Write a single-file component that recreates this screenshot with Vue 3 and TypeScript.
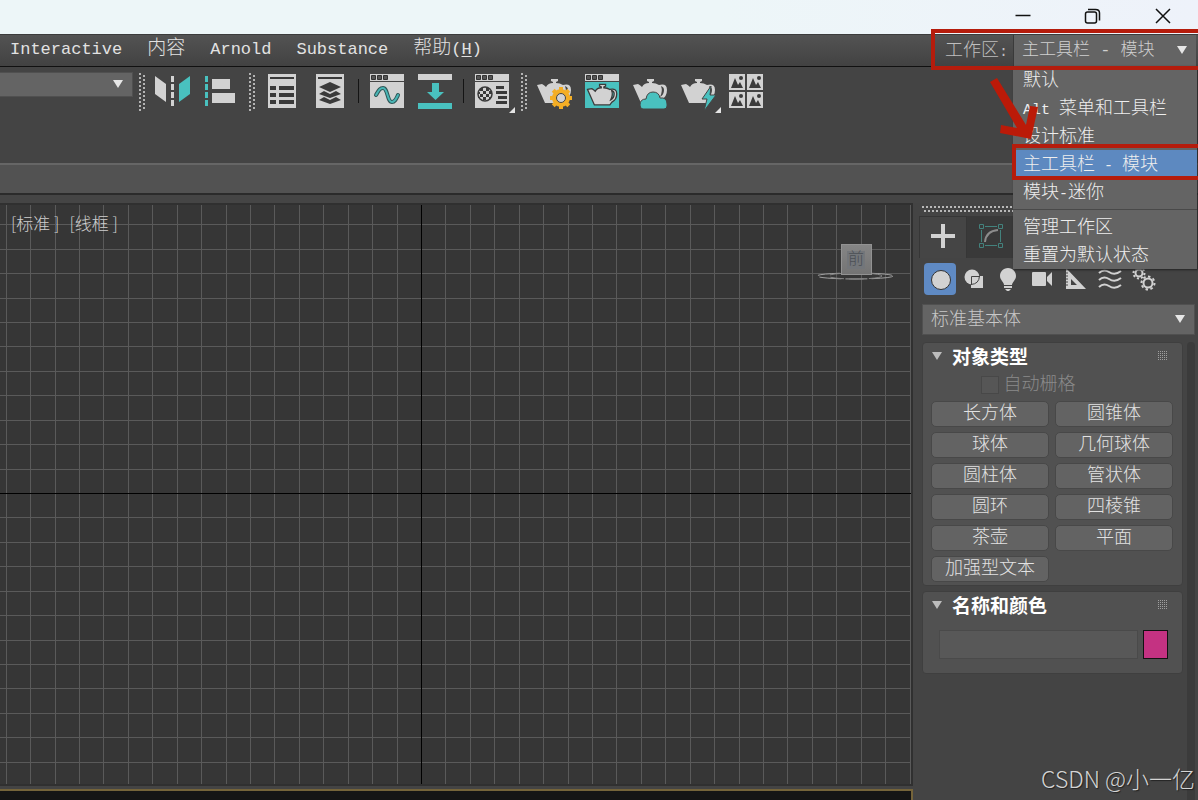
<script setup lang="ts">
import { ref } from 'vue'

interface Segment { text: string; latin: boolean }

/** Splits a label into runs, as Latin letters are set smaller than Chinese ones. */
function segments(text: string): Segment[] {
  return (text.match(/[\x20-\x7e]+|[^\x20-\x7e]+/g) ?? []).map((t) => ({
    text: t,
    latin: /^[\x20-\x7e]/.test(t),
  }))
}

const menus = ['Interactive', '内容', 'Arnold', 'Substance']
const workspaces = ['默认', 'Alt 菜单和工具栏', '设计标准', '主工具栏 - 模块', '模块-迷你']
const workspaceActions = ['管理工作区', '重置为默认状态']
const workspace = ref('主工具栏 - 模块')
const category = ref('标准基本体')
const primitives = [
  '长方体', '圆锥体', '球体', '几何球体', '圆柱体', '管状体',
  '圆环', '四棱锥', '茶壶', '平面', '加强型文本',
]
const objectName = ref('')

const PITCH = 24.43
const columns = Array.from({ length: 120 }, (_, i) => 421 + Math.round((i - 17) * PITCH))
const rows = Array.from({ length: 80 }, (_, i) => 288 + Math.round((i - 11) * PITCH))

const teapot =
  'M7 18L12 17Q14 18 16 20Q18 16 23 16V15L21 14V12H28V14L26 15V16Q30 16 33 18Q41 16 41 23Q41 30 35 33L33 36H15ZM35 19Q37 24 34 30Q38 28 38 23Q38 20 35 19Z'
const gearTeeth = [0, 45, 90, 135, 180, 225, 270, 315]
const tiles = [[7, 7], [25, 7], [7, 25], [25, 25]]
</script>

<template>
  <div class="app">
    <header class="titlebar">
      <button class="win" aria-label="最小化">
        <svg width="18" height="18"><path d="M1.500 8.500H16.500" /></svg>
      </button>
      <button class="win" aria-label="还原">
        <svg width="18" height="18"><rect x="1.500" y="5" width="11" height="11" rx="2" /><path d="M4 2.500H11.500Q15.500 2.500 15.500 6V13.500" /></svg>
      </button>
      <button class="win" aria-label="关闭">
        <svg width="18" height="18"><path d="M2 2L16 16M16 2L2 16" /></svg>
      </button>
    </header>

    <div class="menubar">
      <nav class="menus">
        <button v-for="m in menus" :key="m" class="menu">
          <span v-for="(s, i) in segments(m)" :key="i" :class="{ latin: s.latin }">{{ s.text }}</span>
        </button>
        <button class="menu">帮助<span class="latin">(<u>H</u>)</span></button>
      </nav>
      <div class="workspace">
        <label for="workspace">工作区<span class="small">:</span></label>
        <div class="combo ws-combo">
          <select id="workspace" v-model="workspace">
            <option v-for="w in workspaces" :key="w">{{ w }}</option>
          </select>
          <svg class="caret" width="12" height="10"><path d="M1 1H11L6 9Z" /></svg>
          <div class="dropdown">
            <button
              v-for="w in workspaces" :key="w" class="entry"
              :class="{ active: w === workspace }" @click="workspace = w"
            ><span v-for="(s, i) in segments(w)" :key="i" :class="{ small: s.latin }">{{ s.text }}</span></button>
            <hr />
            <button v-for="a in workspaceActions" :key="a" class="entry">{{ a }}</button>
          </div>
        </div>
      </div>
    </div>

    <div class="toolbar">
      <div class="combo sel-combo">
        <select aria-label="选择集"><option></option></select>
        <svg class="caret" width="12" height="10"><path d="M1 1H11L6 9Z" /></svg>
      </div>
      <i class="grip"></i>
      <button class="tool" aria-label="镜像">
        <svg viewBox="0 0 48 48">
          <path class="lt" d="M7 9L18 17V35L7 27Z" />
          <path class="teal" d="M31 17L42 9V27L31 35Z" />
          <path class="lt" d="M23 9h3v6h-3zM23 17h3v6h-3zM23 25h3v6h-3zM23 33h3v6h-3z" />
        </svg>
      </button>
      <button class="tool" aria-label="对齐">
        <svg viewBox="0 0 48 48">
          <path class="teal" d="M9 9h3v6h-3zM9 17h3v6h-3zM9 25h3v6h-3zM9 33h3v6h-3z" />
          <path class="lt" d="M16 12h18v10h-18zM16 26h23v10h-23z" />
        </svg>
      </button>
      <i class="grip"></i>
      <button class="tool" aria-label="场景资源管理器">
        <svg viewBox="0 0 48 48">
          <rect class="lt" x="10" y="7" width="28" height="34" />
          <path class="dk" d="M12 10h24v2h-24zM12 19h6v4h-6zM21 19h15v4h-15zM12 26h6v4h-6zM21 26h15v4h-15zM12 33h6v4h-6zM21 33h15v4h-15z" />
        </svg>
      </button>
      <button class="tool" aria-label="层资源管理器">
        <svg viewBox="0 0 48 48">
          <rect class="lt" x="10" y="7" width="28" height="34" />
          <path class="dk" d="M12 10h24v2h-24zM13 20L24 15L35 20L24 25ZM13 27L18 24L24 27L30 24L35 27L24 31ZM13 33L18 30L24 33L30 30L35 33L24 37Z" />
        </svg>
      </button>
      <i class="sep"></i>
      <button class="tool" aria-label="曲线编辑器">
        <svg viewBox="0 0 48 48">
          <path class="lt" d="M7 7h34v7h-34zM7 15h34v26h-34z" />
          <path class="box" d="M8.500 8.500h4v4h-4zM14.500 8.500h4v4h-4zM20.500 8.500h4v4h-4z" />
          <path class="wave-edge" d="M13 28C16 23 17 21 20 21C25 21 24 35 29 35C32 35 33 32 35 28" />
          <path class="wave" d="M13 28C16 23 17 21 20 21C25 21 24 35 29 35C32 35 33 32 35 28" />
        </svg>
      </button>
      <button class="tool" aria-label="图解视图">
        <svg viewBox="0 0 48 48">
          <rect class="lt" x="7" y="7" width="34" height="6" />
          <path class="teal" d="M21 16h7v9h5L24.500 33L16 25h5zM7 36h34v6h-34z" />
        </svg>
      </button>
      <i class="sep"></i>
      <button class="tool" aria-label="材质编辑器">
        <svg viewBox="0 0 48 48">
          <path class="lt" d="M7 7h34v7h-34zM7 15h34v26h-34z" />
          <path class="box" d="M8.500 8.500h4v4h-4zM14.500 8.500h4v4h-4zM20.500 8.500h4v4h-4z" />
          <circle class="ring" cx="17" cy="27" r="7" />
          <path class="dk" d="M12 21h3v3h-3zM18 21h3v3h-3zM15 24h3v3h-3zM10 25h2v2h-2zM21 24h3v3h-3zM12 27h3v3h-3zM18 27h3v3h-3zM15 30h3v3h-3zM10 30h2v1h-2zM21 30h2v2h-2z" />
          <path class="dk" d="M28 19h8v3h-8zM28 24h11v3h-11zM30 29h9v3h-9zM28 34h11v3h-11z" />
          <path class="fly" d="M41 46L47 40V46Z" />
        </svg>
      </button>
      <i class="grip"></i>
      <button class="tool" aria-label="渲染设置">
        <svg viewBox="0 0 48 48">
          <path class="lt" fill-rule="evenodd" :d="teapot" />
          <g transform="translate(31 31)">
            <rect v-for="a in gearTeeth" :key="a" class="gold" x="-2" y="-11" width="4" height="5" :transform="`rotate(${a})`" />
            <circle class="gold" r="9" />
            <circle class="hub" r="4.500" />
          </g>
        </svg>
      </button>
      <button class="tool" aria-label="渲染帧窗口">
        <svg viewBox="0 0 48 48">
          <rect class="lt" x="7" y="7" width="34" height="7" />
          <path class="box" d="M8.500 8.500h4v4h-4zM14.500 8.500h4v4h-4zM20.500 8.500h4v4h-4z" />
          <rect class="teal" x="7" y="15" width="34" height="26" />
          <path class="pot" transform="translate(3.500 7) scale(.86)" fill-rule="evenodd" :d="teapot" />
        </svg>
      </button>
      <button class="tool" aria-label="在云中渲染">
        <svg viewBox="0 0 48 48">
          <path class="lt" fill-rule="evenodd" :d="teapot" />
          <path class="teal edge" d="M17 42Q14 42 14 38Q14 32 20 32Q21 25 27 25Q33 25 34 31Q41 30 41 37V39Q41 42 38 42Z" />
        </svg>
      </button>
      <button class="tool" aria-label="渲染产品">
        <svg viewBox="0 0 48 48">
          <path class="lt" fill-rule="evenodd" :d="teapot" />
          <path class="teal edge" d="M37 19L28 32H33L30 44L42 28H36Z" />
          <path class="fly" d="M41 46L47 40V46Z" />
        </svg>
      </button>
      <button class="tool" aria-label="图库">
        <svg viewBox="0 0 48 48">
          <g v-for="([x, y], i) in tiles" :key="i" :transform="`translate(${x} ${y})`">
            <rect class="lt" width="16" height="16" />
            <path class="dk" d="M2 14L6 4L9 11L11 8L14 14Z" />
            <circle class="dk" cx="12" cy="4" r="2" />
          </g>
        </svg>
      </button>
    </div>

    <div class="ribbon"></div>

    <main class="main">
      <section class="views">
        <div class="viewport">
          <svg class="grid" width="100%" height="100%">
            <line v-for="x in columns" :key="'c' + x" :x1="x" :x2="x" y1="0" y2="100%" />
            <line v-for="y in rows" :key="'r' + y" x1="0" x2="100%" :y1="y" :y2="y" />
            <line class="axis" x1="421" x2="421" y1="0" y2="100%" />
            <line class="axis" x1="0" x2="100%" y1="288" y2="288" />
          </svg>
          <div class="view-label"><span>[标准 ]</span><span>[线框 ]</span></div>
          <div class="cube-wrap">
            <svg class="compass" width="80" height="12">
              <ellipse class="c1" cx="39" cy="5" rx="38" ry="3" />
              <ellipse class="c2" cx="39" cy="5" rx="27" ry="3" />
            </svg>
            <div class="cube"><span>前</span></div>
          </div>
        </div>
        <div class="next-view"></div>
      </section>

      <aside class="panel">
        <div class="panel-grip"></div>
        <div class="tabs">
          <button class="tab on" aria-label="创建">
            <svg width="26" height="26"><path class="lt" d="M11 1h4v10h10v4h-10v10h-4v-10h-10v-4h10z" /></svg>
          </button>
          <button class="tab" aria-label="修改">
            <svg width="26" height="26" class="modify">
              <path d="M7 3.500H19M7 22.500H19M3.500 7V19M22.500 7V19" />
              <path d="M1.500 1.500h4v4h-4zM20.500 1.500h4v4h-4zM1.500 20.500h4v4h-4zM20.500 20.500h4v4h-4z" />
              <path class="arc" d="M7 19Q8 8 20 7" />
            </svg>
          </button>
        </div>
        <div class="kinds">
          <button class="kind on" aria-label="几何体"><svg viewBox="0 0 32 32"><circle class="lt rim" cx="17" cy="17" r="9.500" /></svg></button>
          <button class="kind" aria-label="图形"><svg viewBox="0 0 32 32"><circle class="lt" cx="14" cy="14" r="7.500" /><rect class="lt" x="13" y="13" width="12" height="12" /><path class="cut" d="M13.500 22V13.500H22M21.500 13Q21 21 13 21.500" /></svg></button>
          <button class="kind" aria-label="灯光"><svg viewBox="0 0 32 32"><path class="lt" d="M16 5C11 5 8 9 8 13C8 17 12 19 12 22H20C20 19 24 17 24 13C24 9 21 5 16 5ZM12 23h8v2h-8zM13 26h6l-2 2h-2z" /></svg></button>
          <button class="kind" aria-label="摄影机"><svg viewBox="0 0 32 32"><rect class="lt" x="6" y="9" width="14" height="14" rx="1" /><path class="lt" d="M21 14L26 9V23L21 18Z" /></svg></button>
          <button class="kind" aria-label="辅助对象"><svg viewBox="0 0 32 32"><path class="lt" fill-rule="evenodd" d="M6 5L26 26H6ZM11 16V22H17Z" /><path class="cut" d="M6 10h2M6 13h2M6 16h2M6 19h2M6 22h2" /></svg></button>
          <button class="kind" aria-label="空间扭曲"><svg viewBox="0 0 32 32"><path class="waves" d="M5 10C9 6 12 7 15 9S22 12 27 8M5 17C9 13 12 14 15 16S22 19 27 15M5 24C9 20 12 21 15 23S22 26 27 22" /></svg></button>
          <button class="kind" aria-label="系统"><svg viewBox="0 0 32 32">
            <circle class="cog" cx="11" cy="10" r="3.500" /><circle class="cog-teeth" cx="11" cy="10" r="5.500" pathLength="16" />
            <circle class="cog" cx="20" cy="20" r="4.500" /><circle class="cog-teeth" cx="20" cy="20" r="6.500" pathLength="16" />
          </svg></button>
        </div>
        <div class="combo cat-combo">
          <select v-model="category" aria-label="类别"><option>标准基本体</option></select>
          <svg class="caret" width="12" height="10"><path d="M1 1H11L6 9Z" /></svg>
        </div>
        <div class="scroll">
          <div class="rollouts">
            <section class="rollout">
              <h2><svg width="12" height="10"><path d="M1 1H11L6 9Z" /></svg>对象类型<i class="dots"></i></h2>
              <label class="auto"><input type="checkbox" disabled />自动栅格</label>
              <div class="primitives">
                <button v-for="p in primitives" :key="p">{{ p }}</button>
              </div>
            </section>
            <section class="rollout">
              <h2><svg width="12" height="10"><path d="M1 1H11L6 9Z" /></svg>名称和颜色<i class="dots"></i></h2>
              <div class="name-row">
                <input v-model="objectName" type="text" aria-label="名称" />
                <button class="swatch" aria-label="颜色"></button>
              </div>
            </section>
          </div>
          <div class="track"></div>
        </div>
      </aside>
    </main>

    <svg class="marks" width="270" height="184">
      <path class="frame" d="M275 31H5V68H275M275 146H86V178H275" />
      <path class="arrow" d="M62 82L69 78L98 125L102 106L110 107L103 139L72 133L73 125L89 128Z" />
    </svg>
    <div class="watermark">CSDN @小一亿</div>
  </div>
</template>

<style>
body {
  margin: 0;
  background: #444;
}
</style>

<style scoped>
.app {
  position: relative;
  display: flex;
  flex-direction: column;
  min-height: 100vh;
  overflow: hidden;
  background: #444;
  color: #e2e2e2;
  font: 300 18px/28px 'Liberation Mono', 'Noto Sans CJK SC', monospace;
}
button,
select,
input {
  margin: 0;
  padding: 0;
  border: 0;
  border-radius: 0;
  background: none;
  color: inherit;
  font: inherit;
  box-sizing: border-box;
}
svg {
  display: block;
}
.latin {
  font-size: 17px;
}
.small {
  font-size: 15px;
  white-space: pre;
}

.titlebar {
  display: flex;
  justify-content: flex-end;
  height: 34px;
  background: linear-gradient(90deg, #edf6f8 60%, #eef2fa);
}
.win {
  display: grid;
  place-items: center;
  width: 70px;
  height: 32px;
}
.win svg {
  fill: none;
  stroke: #111;
  stroke-width: 1.5;
}

.menubar {
  display: flex;
  justify-content: space-between;
  height: 33px;
  box-sizing: border-box;
  border-top: 1px solid #3c3c3c;
  border-bottom: 1px solid #111;
  background: linear-gradient(#535353, #424242);
}
.menus {
  display: flex;
  gap: 25px;
  padding-left: 10px;
}
.menu {
  font-size: 19px;
  line-height: 26px;
  height: 28px;
  white-space: nowrap;
}
.menu u {
  text-underline-offset: 2px;
}
.workspace {
  display: flex;
  color: #bebebe;
}
.workspace label {
  width: 68px;
  line-height: 32px;
}
.combo {
  position: relative;
  background: #646464;
  box-sizing: border-box;
}
.combo select {
  appearance: none;
  width: 100%;
  height: 100%;
  outline: 0;
}
.caret {
  position: absolute;
  top: 50%;
  right: 8px;
  margin-top: -6px;
  fill: #e6e6e6;
  pointer-events: none;
}
.ws-combo {
  width: 183px;
  height: 31px;
  margin-right: 2px;
  border-left: 1px solid #3a3a3a;
}
.ws-combo select {
  padding-left: 8px;
  font-size: 17px;
  color: #d0d0d0;
}
.dropdown {
  position: absolute;
  z-index: 2;
  top: 31px;
  left: -1px;
  width: 184px;
  background: #646464;
  color: #eee;
  box-shadow: 1px 1px 2px #222;
}
.entry {
  display: block;
  width: 100%;
  height: 28px;
  padding-left: 10px;
  line-height: 30px;
  text-align: left;
  white-space: nowrap;
}
.entry.active {
  background: #5d89c0;
}
.dropdown hr {
  margin: 3px 0;
  border: 0;
  border-top: 1px solid #494949;
}

.toolbar {
  display: flex;
  height: 96px;
}
.sel-combo {
  width: 133px;
  height: 25px;
  margin-top: 5px;
  border: 1px solid #505050;
  border-left: 0;
}
.grip {
  flex: none;
  width: 6px;
  height: 38px;
  margin: 6px 3px 0 5px;
  background:
    repeating-linear-gradient(#b4b4b4 0 2px, transparent 2px 4px) 0 0 / 2px 100% no-repeat,
    repeating-linear-gradient(transparent 0 2px, #b4b4b4 2px 4px) 4px 0 / 2px 100% no-repeat;
}
.sel-combo + .grip {
  margin-left: 6px;
}
.sep {
  flex: none;
  width: 1px;
  height: 24px;
  margin: 12px 4px 0;
  background: #141414;
}
.tool {
  flex: none;
  width: 48px;
  height: 48px;
}
.tool svg {
  width: 48px;
  height: 48px;
}
.lt {
  fill: #d2d2d2;
}
.dk {
  fill: #3a3a3a;
}
.teal {
  fill: #49c1bf;
}
.edge {
  stroke: #444;
  stroke-width: 1;
}
.box {
  fill: #555;
  stroke: #333;
}
.wave,
.wave-edge {
  fill: none;
  stroke: #4ab6b6;
  stroke-width: 2;
  stroke-linecap: round;
}
.wave-edge {
  stroke: #2f5757;
  stroke-width: 4;
}
.ring {
  fill: none;
  stroke: #3a3a3a;
  stroke-width: 1.5;
}
.fly {
  fill: #e4e4e4;
}
.gold {
  fill: #f4ae25;
}
.hub {
  fill: #d2d2d2;
  stroke: #444;
}
.pot {
  fill: #d2d2d2;
  stroke: #3a3a3a;
  stroke-width: 1.5;
}

.ribbon {
  height: 40px;
  box-sizing: border-box;
  border-top: 2px solid #666;
  background: linear-gradient(#525252 28px, #2b2b2b 28px 30px, #454545 30px);
}

.main {
  display: flex;
  flex: 1;
}
.views {
  display: flex;
  flex: 1;
  flex-direction: column;
  min-width: 0;
}
.viewport {
  position: relative;
  flex: 1;
  border: 2px solid #303030;
  border-left: 0;
  background: #363636;
  overflow: hidden;
}
.grid {
  position: absolute;
  inset: 0;
  stroke: #5a5a5a;
  shape-rendering: crispEdges;
}
.axis {
  stroke: #000;
}
.view-label {
  position: relative;
  display: flex;
  gap: 10px;
  padding: 4px 11px;
  font: 300 17px/28px 'Noto Sans CJK SC', sans-serif;
  color: #d0d0d0;
}
.cube-wrap {
  position: absolute;
  top: 39px;
  right: 15px;
  display: grid;
  justify-items: center;
  width: 80px;
}
.compass {
  position: absolute;
  top: 27px;
  fill: none;
}
.c1 {
  stroke: #a0a0a0;
  stroke-dasharray: 22 4;
}
.c2 {
  stroke: #858585;
  stroke-dasharray: 14 5;
}
.cube {
  position: relative;
  display: grid;
  place-items: center;
  width: 31px;
  height: 31px;
  box-sizing: border-box;
  border: 1px solid #929292;
  background: linear-gradient(#858585, #747474);
}
.cube span {
  padding: 0 1px;
  background: #73767a;
  color: #4b4f55;
  font-size: 16px;
  line-height: 18px;
}
.next-view {
  height: 11px;
  margin-top: 3px;
  box-sizing: border-box;
  border: 2px solid #75643a;
  border-width: 2px 2px 0 0;
  background: #151515;
}

.panel {
  display: flex;
  flex: none;
  flex-direction: column;
  width: 285px;
  box-sizing: border-box;
  padding: 3px 3px 0 9px;
}
.panel-grip {
  height: 6px;
  margin-right: 5px;
  background:
    repeating-linear-gradient(90deg, #b8b8b8 0 2px, transparent 2px 4px) 0 0 / 100% 2px no-repeat,
    repeating-linear-gradient(90deg, transparent 0 2px, #b8b8b8 2px 4px) 0 4px / 100% 2px no-repeat;
}
.tabs {
  display: flex;
  height: 42px;
  margin: 4px 0 0 -3px;
}
.tab {
  display: grid;
  place-items: center;
  width: 48px;
  padding-bottom: 3px;
  background: #393939;
}
.tab.on {
  border: 1px solid #363636;
  border-bottom: 0;
  background: #454545;
}
.modify {
  fill: none;
  stroke: #43827d;
}
.modify .arc {
  stroke: #8c8c8c;
  stroke-width: 2;
}
.kinds {
  display: flex;
  gap: 2px;
  margin: 5px 0 0 2px;
}
.kind {
  width: 32px;
  height: 32px;
  border-radius: 4px;
}
.kind.on {
  background: #5f8ac4;
}
.rim {
  stroke: #333;
}
.cut {
  fill: none;
  stroke: #444;
}
.waves {
  fill: none;
  stroke: #d2d2d2;
  stroke-width: 2;
}
.cog {
  fill: none;
  stroke: #d2d2d2;
  stroke-width: 2;
}
.cog-teeth {
  fill: none;
  stroke: #d2d2d2;
  stroke-width: 2;
  stroke-dasharray: 1 1;
}
.cat-combo {
  height: 31px;
  margin-top: 9px;
  border: 1px solid #505050;
  color: #c8c8c8;
}
.cat-combo select {
  padding-left: 8px;
}
.scroll {
  display: flex;
  flex: 1;
  gap: 4px;
  margin-top: 7px;
}
.rollouts {
  display: flex;
  flex: 1;
  flex-direction: column;
  gap: 5px;
  min-width: 0;
}
.track {
  width: 8px;
  border-radius: 4px 4px 0 0;
  background: #3b3b3b;
}
.rollout {
  padding: 0 9px 3px 8px;
  border: 1px solid #3f3f3f;
  border-radius: 4px;
  background: #515151;
}
.rollout h2 {
  display: flex;
  align-items: center;
  gap: 9px;
  height: 26px;
  margin: 0;
  color: #fff;
  font: 700 19px/26px 'Noto Sans CJK SC', sans-serif;
}
.rollout h2 svg {
  fill: #bcbcbc;
}
.rollout h2 .dots {
  width: 10px;
  height: 10px;
  margin: 0 6px 0 auto;
  background: conic-gradient(#a0a0a0 25%, transparent 0) 0 0 / 2px 2px;
}
.auto {
  display: flex;
  align-items: center;
  justify-content: center;
  gap: 5px;
  height: 32px;
  padding-right: 48px;
  color: #8a8a8a;
}
.auto input {
  appearance: none;
  width: 18px;
  height: 18px;
  border: 1px solid #484848;
  background: #565656;
}
.primitives {
  display: grid;
  grid-template-columns: 1fr 1fr;
  gap: 5px 6px;
}
.primitives button {
  height: 26px;
  border: 1px solid #484848;
  border-radius: 5px;
  background: #636363;
  line-height: 22px;
}
.name-row {
  display: flex;
  gap: 5px;
  padding: 12px 5px 11px 8px;
}
.name-row input {
  flex: 1;
  min-width: 0;
  height: 29px;
  border: 1px solid #4a4a4a;
  background: #585858;
}
.swatch {
  width: 25px;
  height: 29px;
  border: 1px solid #111;
  background: #c43282;
}

.marks {
  position: absolute;
  z-index: 3;
  top: 0;
  right: 0;
  pointer-events: none;
}
.frame {
  fill: none;
  stroke: #b51c0c;
  stroke-width: 4;
}
.arrow {
  fill: #bb1a08;
}
.watermark {
  position: absolute;
  z-index: 3;
  right: 3px;
  bottom: 7px;
  color: #d4d4d4;
  font: 300 23px/30px 'Noto Sans CJK SC', sans-serif;
  text-shadow: 1px 1px 1px #222;
}
</style>
